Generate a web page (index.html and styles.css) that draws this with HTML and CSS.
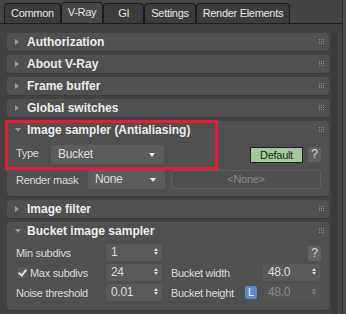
FILE: index.html
```html
<!DOCTYPE html>
<html lang="en">
<head>
    <meta charset="UTF-8">
    <title>V-Ray Render Setup</title>
    <link rel="stylesheet" href="styles.css">
</head>
<body>
    <div class="window">
        <div class="tabs">
            <div class="tab">Common</div>
            <div class="tab active">V-Ray</div>
            <div class="tab">GI</div>
            <div class="tab">Settings</div>
            <div class="tab">Render Elements</div>
        </div>

        <div class="panel">
            <div class="rollouts">
                <div class="rollout">
                    <div class="head"><span class="arrow"></span>Authorization<span class="grip"></span></div>
                </div>
                <div class="rollout">
                    <div class="head"><span class="arrow"></span>About V-Ray<span class="grip"></span></div>
                </div>
                <div class="rollout">
                    <div class="head"><span class="arrow"></span>Frame buffer<span class="grip"></span></div>
                </div>
                <div class="rollout">
                    <div class="head"><span class="arrow"></span>Global switches<span class="grip"></span></div>
                </div>

                <!-- Image sampler -->
                <div class="rollout open">
                    <div class="head"><span class="arrow"></span>Image sampler (Antialiasing)<span class="grip"></span></div>
                    <div class="body sampler">
                        <div class="row">
                            <span class="label type-label">Type</span>
                            <div class="dropdown type-drop">Bucket<span class="drop-arrow"></span></div>
                            <div class="btn-default">Default</div>
                            <div class="btn-help">?</div>
                        </div>
                        <div class="row">
                            <span class="label mask-label">Render mask</span>
                            <div class="dropdown mask-drop">None<span class="drop-arrow"></span></div>
                            <div class="none-box">&lt;None&gt;</div>
                        </div>
                    </div>
                </div>

                <div class="rollout">
                    <div class="head"><span class="arrow"></span>Image filter<span class="grip"></span></div>
                </div>

                <!-- Bucket image sampler -->
                <div class="rollout open">
                    <div class="head"><span class="arrow"></span>Bucket image sampler<span class="grip"></span></div>
                    <div class="body bucket">
                        <div class="row">
                            <span class="label col1">Min subdivs</span>
                            <div class="spinner">1<span class="spin-arrows"></span></div>
                            <div class="btn-help">?</div>
                        </div>
                        <div class="row">
                            <span class="label col1"><span class="check"></span>Max subdivs</span>
                            <div class="spinner">24<span class="spin-arrows"></span></div>
                            <span class="label col2">Bucket width</span>
                            <div class="spinner wide">48.0<span class="spin-arrows"></span></div>
                        </div>
                        <div class="row">
                            <span class="label col1">Noise threshold</span>
                            <div class="spinner">0.01<span class="spin-arrows"></span></div>
                            <span class="label col2 short">Bucket height</span>
                            <div class="btn-lock">L</div>
                            <div class="spinner wide disabled">48.0<span class="spin-arrows"></span></div>
                        </div>
                    </div>
                </div>
            </div>
            <div class="scrollbar"></div>
            <div class="edge"></div>
        </div>

        <div class="highlight"></div>
    </div>
</body>
</html>
```

FILE: styles.css
```css
* {
    margin: 0;
    padding: 0;
    box-sizing: border-box;
}

body {
    font-family: "Liberation Sans", Arial, sans-serif;
    font-size: 11px;
    letter-spacing: -0.3px;
    background-color: #444;
    color: #dcdcdc;
}

.window {
    position: relative;
    width: 346px;
    height: 314px;
    overflow: hidden;
}

/* tabs */

.tabs {
    display: flex;
    height: 24px;
    padding: 3px 0 0 4px;
    border-bottom: 1px solid #1f1f1f;
    background-color: #444;
}

.tab {
    min-width: 41px;
    height: 20px;
    padding: 0 6px;
    margin-right: 0;
    line-height: 19px;
    text-align: center;
    color: #e4e4e4;
    background-color: #3c3c3c;
    border: 1px solid #1c1c1c;
    border-bottom: none;
    border-radius: 4px 4px 0 0;
}

.tab.active {
    height: 21px;
    margin-top: -1px;
    background-color: #474747;
}

/* panel */

.panel {
    display: flex;
    height: 290px;
    padding: 9px 0 0 7px;
    background-color: #424242;
}

.rollouts {
    width: 322px;
    display: flex;
    flex-direction: column;
    gap: 4px;
}

.rollout {
    background-color: #505050;
    border-radius: 3px;
    box-shadow: 0 1px 0 #3a3a3a;
}

.head {
    position: relative;
    display: flex;
    align-items: center;
    height: 18px;
    padding-left: 8px;
    font-size: 12px;
    font-weight: bold;
    letter-spacing: 0;
    color: #ececec;
}

.arrow {
    width: 0;
    height: 0;
    margin-right: 8px;
    border-left: 4px solid #9a9a9a;
    border-top: 3px solid transparent;
    border-bottom: 3px solid transparent;
}

.open .arrow {
    margin-right: 6px;
    border-top: 4px solid #9a9a9a;
    border-left: 3px solid transparent;
    border-right: 3px solid transparent;
    border-bottom: none;
}

.grip {
    position: absolute;
    right: 9px;
    top: 6px;
    width: 1px;
    height: 1px;
    background-color: #8c8c8c;
    box-shadow: 2px 0 #8c8c8c, 4px 0 #8c8c8c,
                0 2px #8c8c8c, 2px 2px #8c8c8c, 4px 2px #8c8c8c,
                0 4px #8c8c8c, 2px 4px #8c8c8c, 4px 4px #8c8c8c;
}

.body {
    display: flex;
    flex-direction: column;
    padding: 6px 8px 7px 9px;
}

.row {
    display: flex;
    align-items: center;
}

.sampler {
    gap: 6px;
}

.sampler .row {
    height: 19px;
}

.bucket {
    padding-top: 4px;
    padding-bottom: 9px;
    gap: 3px;
}

.bucket .row {
    height: 17px;
}

.label {
    display: flex;
    align-items: center;
    color: #dcdcdc;
}

.type-label {
    width: 35px;
    margin-top: -4px;
}

.mask-label {
    width: 72px;
}

.col1 {
    width: 90px;
}

.col2 {
    width: 92px;
    margin-left: 9px;
}

.col2.short {
    width: 74px;
}

/* controls */

.dropdown {
    position: relative;
    height: 19px;
    padding-left: 7px;
    line-height: 19px;
    font-size: 12px;
    color: #dedede;
    background-color: #5c5c5c;
    border-radius: 2px;
}

.type-drop {
    width: 113px;
}

.mask-drop {
    width: 77px;
}

.drop-arrow {
    position: absolute;
    right: 9px;
    top: 8px;
    width: 0;
    height: 0;
    border-top: 4px solid #e8e8e8;
    border-left: 3px solid transparent;
    border-right: 3px solid transparent;
}

.btn-default {
    width: 53px;
    height: 16px;
    margin-left: auto;
    line-height: 14px;
    text-align: center;
    color: #1e1e1e;
    background-color: #a6c79d;
    border: 1px solid #1e1e1e;
}

.btn-help {
    width: 13px;
    height: 15px;
    margin-left: 5px;
    line-height: 15px;
    text-align: center;
    font-size: 12px;
    color: #d8d8d8;
    background-color: #626262;
    border-radius: 3px;
}

.bucket .btn-help {
    margin-left: auto;
    margin-top: 2px;
}

.none-box {
    flex: 1;
    height: 19px;
    margin-left: 6px;
    line-height: 17px;
    text-align: center;
    color: #8a8a8a;
    background-color: #4f4f4f;
    border: 1px solid #5d5d5d;
    border-radius: 2px;
}

.spinner {
    position: relative;
    width: 56px;
    height: 17px;
    padding-left: 5px;
    line-height: 17px;
    font-size: 12px;
    color: #dedede;
    background-color: #5a5a5a;
    border-radius: 2px;
}

.spinner.wide {
    width: 57px;
}

.spinner.disabled {
    color: #8a8a8a;
    background-color: #545454;
}

.spin-arrows {
    position: absolute;
    right: 4px;
    top: 4px;
    width: 0;
    height: 0;
    border-bottom: 3px solid #dcdcdc;
    border-left: 2.5px solid transparent;
    border-right: 2.5px solid transparent;
}

.spin-arrows::after {
    content: "";
    position: absolute;
    left: -2.5px;
    top: 4px;
    width: 0;
    height: 0;
    border-top: 3px solid #dcdcdc;
    border-left: 2.5px solid transparent;
    border-right: 2.5px solid transparent;
}

.disabled .spin-arrows {
    border-bottom-color: #7e7e7e;
}

.disabled .spin-arrows::after {
    border-top-color: #7e7e7e;
}

.check {
    position: relative;
    width: 10px;
    height: 11px;
    margin: 0 3px 0 1px;
    background-color: #5a5a5a;
    border-radius: 1px;
}

.check::after {
    content: "";
    position: absolute;
    left: 3px;
    top: 1px;
    width: 3px;
    height: 6px;
    border-right: 2px solid #e0e0e0;
    border-bottom: 2px solid #e0e0e0;
    transform: rotate(40deg);
}

.btn-lock {
    width: 12px;
    height: 13px;
    margin-right: 6px;
    line-height: 13px;
    text-align: center;
    color: #fff;
    background-color: #5b8bcc;
    border-radius: 3px;
}

/* scrollbar and window edge */

.scrollbar {
    width: 6px;
    margin-left: 2px;
    margin-top: -1px;
    background-color: #3b3b3b;
    border-right: 5px solid #464646;
    box-sizing: content-box;
}

.edge {
    width: 1px;
    margin-top: -34px;
    background-color: #2a2a2a;
    box-shadow: 1px 0 0 #505050, 2px 0 0 #4a4a4a, 3px 0 0 #4a4a4a;
}

/* red annotation box over the sampler */

.highlight {
    position: absolute;
    left: 5px;
    top: 120px;
    width: 213px;
    height: 50px;
    border: 3px solid #e8193c;
}
```
